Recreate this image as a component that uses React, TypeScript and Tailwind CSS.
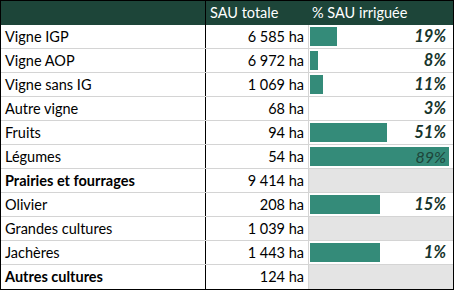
const rows = [
  { label: "Vigne IGP", sau: "6 585 ha", pct: "19%", bar: 27 },
  { label: "Vigne AOP", sau: "6 972 ha", pct: "8%", bar: 8 },
  { label: "Vigne sans IG", sau: "1 069 ha", pct: "11%", bar: 13 },
  { label: "Autre vigne", sau: "68 ha", pct: "3%", bar: 0 },
  { label: "Fruits", sau: "94 ha", pct: "51%", bar: 77 },
  { label: "Légumes", sau: "54 ha", pct: "89%", bar: 139, light: true },
  { label: "Prairies et fourrages", sau: "9 414 ha", bold: true },
  { label: "Olivier", sau: "208 ha", pct: "15%", bar: 70 },
  { label: "Grandes cultures", sau: "1 039 ha" },
  { label: "Jachères", sau: "1 443 ha", pct: "1%", bar: 70 },
  { label: "Autres cultures", sau: "124 ha", bold: true },
];

export default function App() {
  return (
    <div
      className="w-[454px] border border-black bg-white text-[14.5px] text-black"
      style={{ fontFamily: "Lato, 'Open Sans', sans-serif" }}
    >
      {/* header */}
      <div className="flex h-6 bg-[#1d4539] text-white">
        <div className="w-[205px] border-r border-black" />
        <div className="flex w-[103px] items-center border-r border-[#1d4539] pl-1">
          SAU totale
        </div>
        <div className="flex flex-1 items-center pl-[3px]">% SAU irriguée</div>
      </div>

      {rows.map((r, i) => (
        <div
          key={r.label}
          className={`flex h-6 ${i < rows.length - 1 ? "border-b border-[#d4d4d4]" : ""}`}
        >
          <div
            className={`flex w-[205px] items-center border-r border-black pl-1 ${r.bold ? "font-bold" : ""}`}
          >
            {r.label}
          </div>
          <div className="flex w-[103px] items-center justify-end border-r border-[#d4d4d4] pr-1">
            {r.sau}
          </div>
          <div
            className={`relative flex flex-1 items-center justify-end py-[2px] pr-[7px] pl-px ${r.pct ? "" : "bg-[#e4e4e4]"}`}
          >
            {r.pct && r.bar > 0 && (
              <div
                className="absolute top-[2px] bottom-[2px] left-px bg-[#348b79]"
                style={{ width: r.bar }}
              />
            )}
            {r.pct && (
              <span
                className={`relative italic ${r.light ? "text-[16px] font-normal text-[#1d4539]" : "text-[16.5px] font-bold text-[#16342b]"}`}
              >
                {r.pct}
              </span>
            )}
          </div>
        </div>
      ))}
    </div>
  );
}
